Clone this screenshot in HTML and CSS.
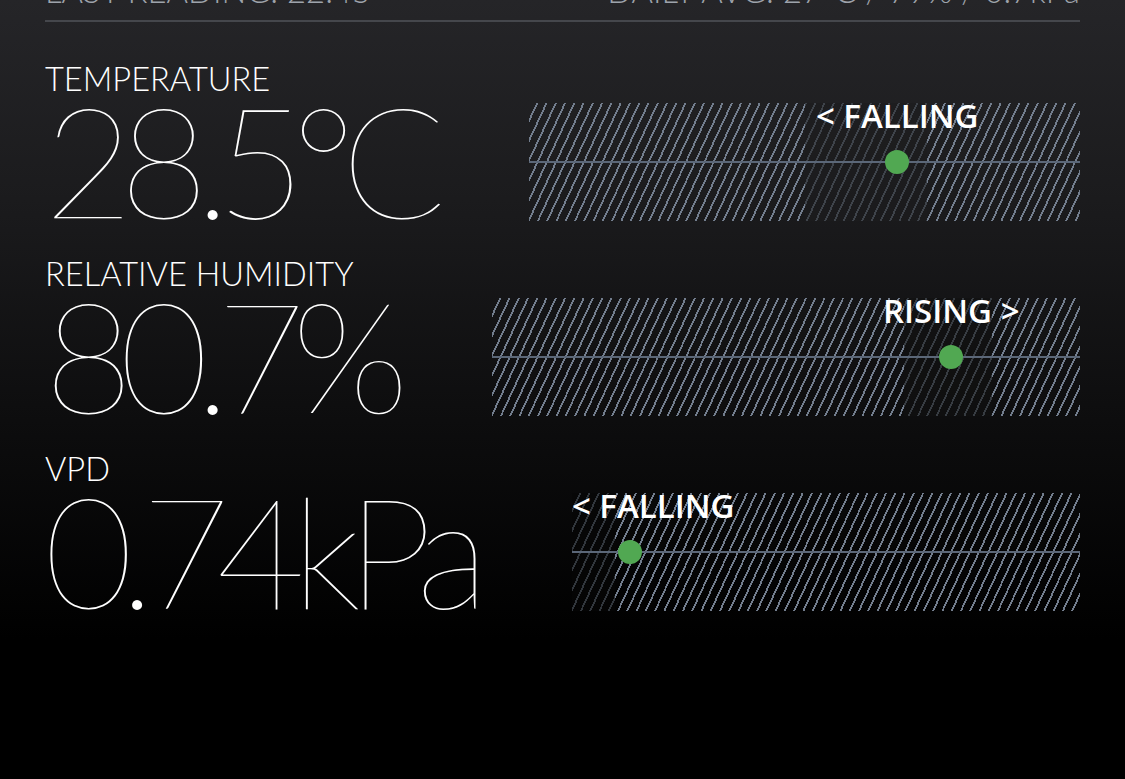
FILE: index.html
```html
<!DOCTYPE html>
<html lang="en">
<head>
<meta charset="utf-8">
<title>Climate readings</title>
<link rel="stylesheet" href="styles.css">
</head>
<body>
<main class="screen">
  <header class="summary">
    <span class="summary-item">LAST READING: 22:45</span>
    <span class="summary-item">DAILY AVG: 27°C / 79% / 0.7kPa</span>
  </header>

  <section class="metric metric-temp">
    <div class="metric-label">TEMPERATURE</div>
    <div class="metric-body">
      <div class="metric-value">28.5°C</div>
      <div class="trend">
        <div class="trend-range" style="left:50.1%;width:22.1%"></div>
        <div class="trend-axis"></div>
        <div class="trend-dot" style="left:66.8%"></div>
        <div class="trend-tag" style="left:66.8%">&lt; FALLING</div>
      </div>
    </div>
  </section>

  <section class="metric metric-hum">
    <div class="metric-label">RELATIVE HUMIDITY</div>
    <div class="metric-body">
      <div class="metric-value">80.7%</div>
      <div class="trend">
        <div class="trend-range" style="left:70.1%;width:14.9%"></div>
        <div class="trend-axis"></div>
        <div class="trend-dot" style="left:78.1%"></div>
        <div class="trend-tag" style="left:78.1%">RISING &gt;</div>
      </div>
    </div>
  </section>

  <section class="metric metric-vpd">
    <div class="metric-label">VPD</div>
    <div class="metric-body">
      <div class="metric-value">0.74kPa</div>
      <div class="trend">
        <div class="trend-range" style="left:0;width:8.4%"></div>
        <div class="trend-axis"></div>
        <div class="trend-dot" style="left:11.4%"></div>
        <div class="trend-tag trend-tag-start">&lt; FALLING</div>
      </div>
    </div>
  </section>
</main>
</body>
</html>
```

FILE: styles.css
```css
* {
  box-sizing: border-box;
}

html, body {
  margin: 0;
  padding: 0;
  height: 100%;
}

body {
  background: linear-gradient(180deg, #252528 0px, #1b1b1d 200px, #0d0d0e 420px, #000 640px, #000 100%);
  overflow: hidden;
  color: #fff;
  font-family: "Lato", "Liberation Sans", sans-serif;
}

.screen {
  padding: 0 45px;
}

.summary {
  display: flex;
  justify-content: space-between;
  margin-top: -27px;
  padding-bottom: 11px;
  border-bottom: 2px solid #45474c;
  font-weight: 300;
  font-size: 32.8px;
  line-height: 36px;
  color: #9ea3ab;
}

.metric {
  display: flex;
  flex-direction: column;
}

.metric-temp {
  margin-top: 39px;
  --range-tint: rgba(28, 28, 30, 0.6);
}

.metric-hum {
  margin-top: 35px;
  --range-tint: rgba(16, 16, 17, 0.6);
}

.metric-vpd {
  margin-top: 35px;
  --range-tint: rgba(6, 6, 6, 0.6);
}

.metric-label {
  font-weight: 300;
  font-size: 32.6px;
  line-height: 36px;
  margin-bottom: 6px;
}

.metric-body {
  display: flex;
  align-items: flex-start;
  gap: 97px;
}

.metric-value {
  font-weight: 100;
  font-size: 154px;
  line-height: 114px;
  height: 118px;
  white-space: nowrap;
  margin-left: -1px;
  letter-spacing: -14px;
}

.trend {
  position: relative;
  flex: 1;
  height: 118px;
  background: repeating-linear-gradient(115deg, transparent 0px, transparent 6.6px, #727d8d 6.6px, #727d8d 8.4px);
}

.trend-range {
  position: absolute;
  top: 0;
  bottom: 0;
  background: var(--range-tint);
}

.trend-axis {
  position: absolute;
  left: 0;
  right: 0;
  top: 58px;
  height: 2px;
  background: #5b6778;
}

.trend-dot {
  position: absolute;
  top: 47px;
  width: 24px;
  height: 24px;
  margin-left: -12px;
  border-radius: 50%;
  background: #51a852;
}

.trend-tag {
  position: absolute;
  top: -7px;
  transform: translateX(-50%);
  font-family: "Open Sans", "Liberation Sans", sans-serif;
  font-weight: 600;
  font-size: 33px;
  line-height: 40px;
  white-space: nowrap;
  color: #fff;
}

.trend-tag-start {
  left: 0;
  transform: none;
}
```
